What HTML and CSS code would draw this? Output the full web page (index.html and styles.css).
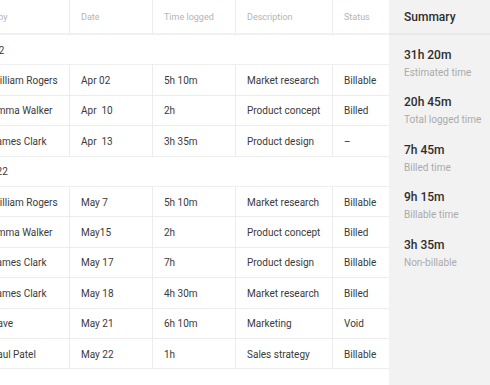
FILE: index.html
```html
<!DOCTYPE html>
<html lang="en">
<head>
<meta charset="utf-8">
<title>Time log</title>
<link rel="stylesheet" href="styles.css">
</head>
<body>
<div class="page">
  <div class="table-wrap">
    <table class="log">
      <colgroup>
        <col class="c-name"><col class="c-date"><col class="c-time"><col class="c-desc"><col class="c-status">
      </colgroup>
      <thead>
        <tr><th class="first">Logged by</th><th>Date</th><th>Time logged</th><th>Description</th><th class="last">Status</th></tr>
      </thead>
      <tbody>
        <tr class="group"><td colspan="5">Apr 2022</td></tr>
        <tr><td class="name">William Rogers</td><td>Apr 02</td><td>5h 10m</td><td>Market research</td><td class="last">Billable</td></tr>
        <tr><td class="name">Emma Walker</td><td>Apr&nbsp; 10</td><td>2h</td><td>Product concept</td><td class="last">Billed</td></tr>
        <tr><td class="name">James Clark</td><td>Apr&nbsp; 13</td><td>3h 35m</td><td>Product design</td><td class="last">–</td></tr>
        <tr class="group"><td colspan="5">May 2022</td></tr>
        <tr><td class="name">William Rogers</td><td>May 7</td><td>5h 10m</td><td>Market research</td><td class="last">Billable</td></tr>
        <tr><td class="name">Emma Walker</td><td>May15</td><td>2h</td><td>Product concept</td><td class="last">Billed</td></tr>
        <tr><td class="name">James Clark</td><td>May 17</td><td>7h</td><td>Product design</td><td class="last">Billable</td></tr>
        <tr><td class="name">James Clark</td><td>May 18</td><td>4h 30m</td><td>Market research</td><td class="last">Billed</td></tr>
        <tr><td class="name">Dave</td><td>May 21</td><td>6h 10m</td><td>Marketing</td><td class="last">Void</td></tr>
        <tr><td class="name">Paul Patel</td><td>May 22</td><td>1h</td><td>Sales strategy</td><td class="last">Billable</td></tr>
      </tbody>
    </table>
  </div>
  <aside class="summary">
    <div class="summary-head">Summary</div>
    <div class="stats">
      <div class="stat"><div class="stat-value">31h 20m</div><div class="stat-label">Estimated time</div></div>
      <div class="stat"><div class="stat-value">20h 45m</div><div class="stat-label">Total logged time</div></div>
      <div class="stat"><div class="stat-value">7h 45m</div><div class="stat-label">Billed time</div></div>
      <div class="stat"><div class="stat-value">9h 15m</div><div class="stat-label">Billable time</div></div>
      <div class="stat"><div class="stat-value">3h 35m</div><div class="stat-label">Non-billable</div></div>
    </div>
  </aside>
</div>
</body>
</html>
```

FILE: styles.css
```css
html, body {
  margin: 0;
  padding: 0;
  background: #ffffff;
}

body {
  font-family: Roboto, "Liberation Sans", Arial, sans-serif;
  color: #3a3a3a;
}

.page {
  display: flex;
  width: 490px;
  height: 385px;
  overflow: hidden;
}

.table-wrap {
  width: 389px;
  flex: 0 0 389px;
  overflow: hidden;
}

.log {
  margin-left: -48px;
  width: 437px;
  table-layout: fixed;
  border-collapse: separate;
  border-spacing: 0;
}

.c-name { width: 118px; }
.c-date { width: 83px; }
.c-time { width: 83px; }
.c-desc { width: 97px; }
.c-status { width: 56px; }

.log th {
  height: 35px;
  box-sizing: border-box;
  padding: 1px 0 0 11px;
  font-size: 9px;
  font-weight: 400;
  color: #b4b4b4;
  text-align: left;
  vertical-align: middle;
  white-space: nowrap;
  border-bottom: 2px solid #f1f1f1;
  border-right: 1px solid #ececec;
}

.log th.first {
  padding-left: 14px;
}

.log th.last,
.log td.last {
  border-right: 0;
}

.log tbody tr {
  height: 30.4px;
}

.log td {
  box-sizing: border-box;
  padding: 1px 0 0 11px;
  font-size: 10px;
  color: #3a3a3a;
  vertical-align: middle;
  white-space: nowrap;
  overflow: hidden;
  border-bottom: 1px solid #ececec;
  border-right: 1px solid #ececec;
}

.log td.name {
  padding-left: 39px;
}

.log tr.group td {
  padding-left: 12px;
  border-right: 0;
  border-bottom-color: #efefef;
}

.summary {
  flex: 1 1 auto;
  background: #f2f2f2;
}

.summary-head {
  height: 35px;
  box-sizing: border-box;
  display: flex;
  align-items: center;
  padding: 1px 0 0 15px;
  font-size: 12px;
  font-weight: 500;
  color: #2e2e2e;
  border-bottom: 2px solid #e9e9e9;
}

.stats {
  display: flex;
  flex-direction: column;
  gap: 14.5px;
  padding: 11.5px 0 0 15px;
}

.stat-value {
  font-size: 12px;
  line-height: 16px;
  font-weight: 500;
  color: #2e2e2e;
}

.stat-label {
  margin-top: 3px;
  font-size: 10px;
  line-height: 14px;
  color: #ababab;
}
```
